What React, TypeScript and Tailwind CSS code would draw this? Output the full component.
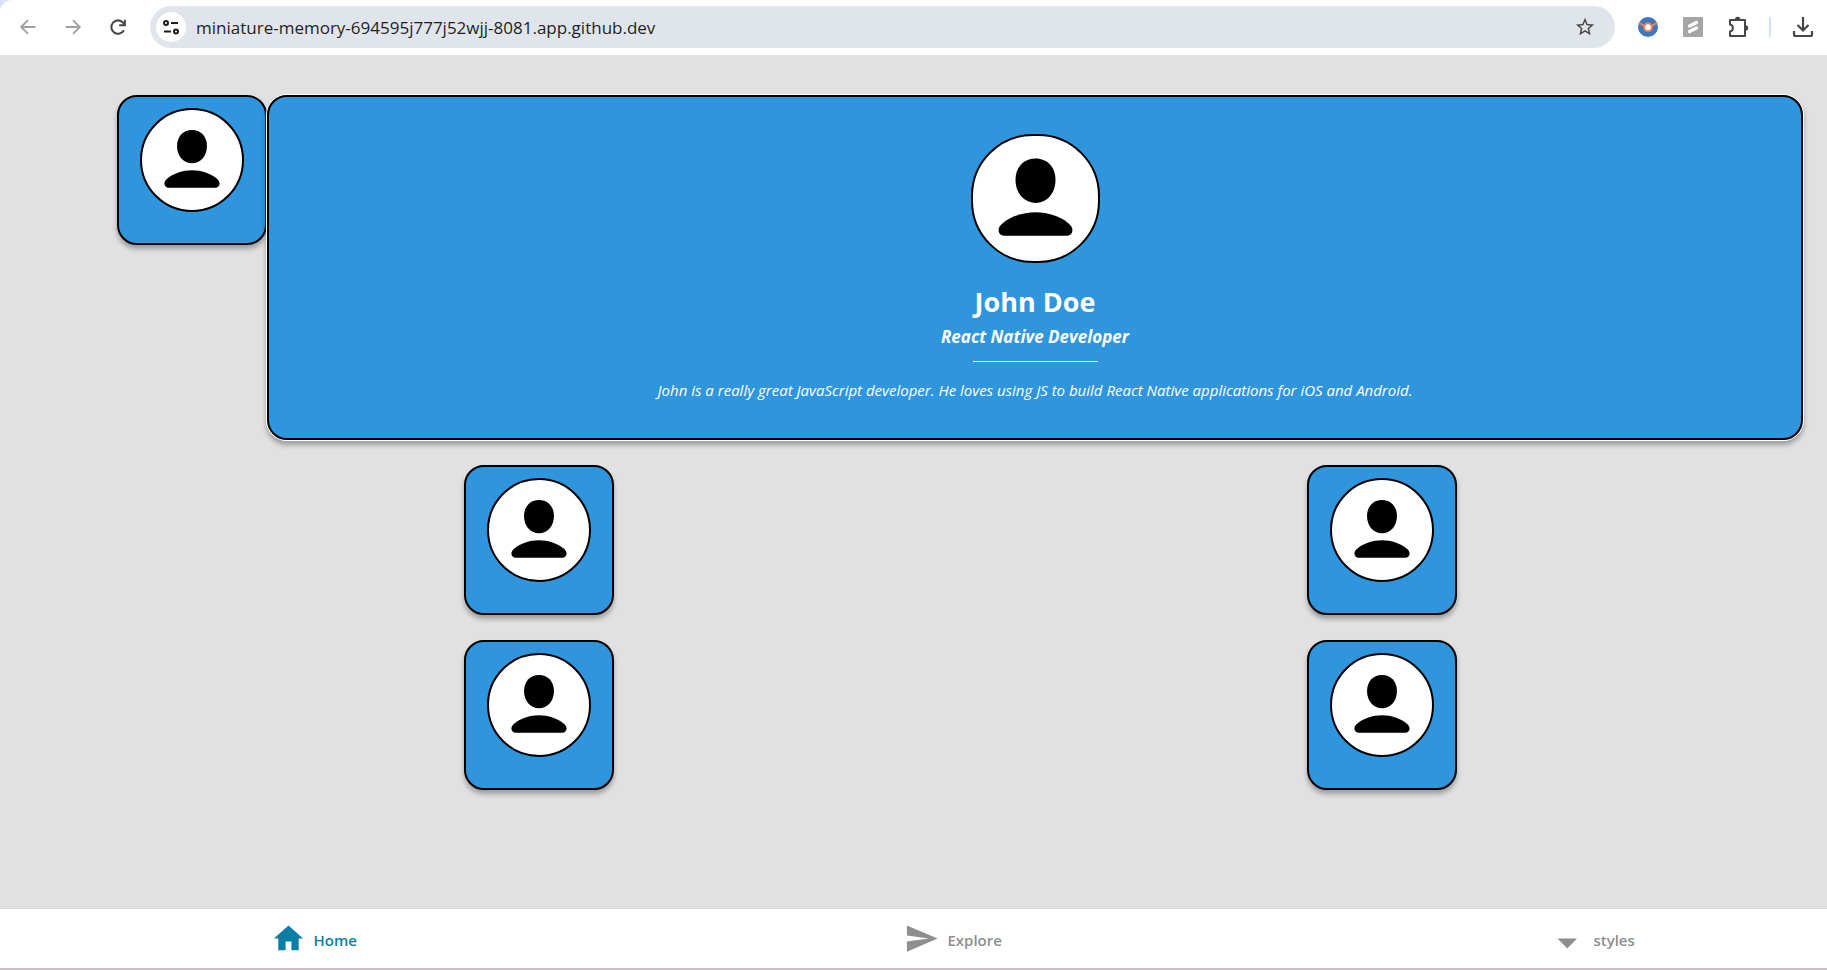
import React from "react";
import { MdHome, MdSend, MdStarOutline } from "react-icons/md";

function PersonIcon({ viewBox }: { viewBox: string }) {
  return (
    <svg viewBox={viewBox} className="size-full" fill="#000" aria-hidden="true">
      <path d="M50 18C60 18 66 25.500 66 35C66 46 59 53.500 50 53.500C41 53.500 34 46 34 35C34 25.500 40 18 50 18Z" />
      <path d="M50 61C60 61 70 64.500 76 69.500C79 72 79.500 73.500 79.500 75.500C79.500 78 77.500 79.700 75 79.700H25C22.500 79.700 20.500 78 20.500 75.500C20.500 73.500 21 72 24 69.500C30 64.500 40 61 50 61Z" />
    </svg>
  );
}

function MiniCard() {
  return (
    <article className="flex size-[150px] shrink-0 justify-center rounded-[20px] border-2 border-black bg-[#2f95dc] pt-[11px] shadow-[0_4px_5px_rgba(0,0,0,0.3)]">
      <div className="size-[104px] rounded-full border-2 border-black bg-white">
        <PersonIcon viewBox="-3.5 -3.5 107 107" />
      </div>
    </article>
  );
}

function ProfileCard() {
  return (
    <article className="-mx-px -mt-px min-w-0 flex-1 rounded-[21px] border border-white shadow-[0_4px_5px_rgba(0,0,0,0.3)]">
      <div className="flex flex-col items-center rounded-[20px] border-2 border-black bg-[#2f95dc] px-4 pt-[37px] pb-9 text-white">
        <div className="size-[129px] rounded-[62px] border-2 border-black bg-white">
          <PersonIcon viewBox="0 0 100 100" />
        </div>
        <h1 className="mt-5 text-[27px] leading-[38px] font-bold">John Doe</h1>
        <p className="text-[17px] leading-8 font-bold italic">React Native Developer</p>
        <hr className="mt-2 w-[125px] border-white" />
        <p className="mt-4 text-[15px] leading-6 italic">
          John is a really great JavaScript developer. He loves using JS to build React Native applications for iOS and
          Android.
        </p>
      </div>
    </article>
  );
}

const toolButton = "flex h-10 w-[45px] shrink-0 items-center justify-center";

function BrowserBar() {
  return (
    <header className="bg-[#d3e3fd]">
      <div className="flex h-[55px] items-center rounded-tl-xl bg-white pr-0.5 pb-px pl-[5px]">
        <button aria-label="Back" className={toolButton}>
          <svg viewBox="0 0 24 24" className="size-[22px]" fill="none" stroke="#a0a0a0" strokeWidth="2">
            <path d="M20 12H5M12 4.500L4.500 12L12 19.500" />
          </svg>
        </button>
        <button aria-label="Forward" className={toolButton}>
          <svg viewBox="0 0 24 24" className="size-[22px]" fill="none" stroke="#a0a0a0" strokeWidth="2">
            <path d="M4 12H19M12 4.500L19.500 12L12 19.500" />
          </svg>
        </button>
        <button aria-label="Reload" className={toolButton}>
          <svg viewBox="0 0 24 24" className="size-[22px]" fill="none" stroke="#444746" strokeWidth="2.2">
            <path d="M18.500 15.500A7.300 7.300 0 1 1 17.500 7.200L19 9" />
            <path d="M19.500 4V10.200H13.300" />
          </svg>
        </button>
        <div className="ml-2.5 flex h-[42px] min-w-0 flex-1 items-center rounded-full bg-[#e0e5ec] pr-2 pl-1.5">
          <button aria-label="Site information" className="flex size-[30px] shrink-0 items-center justify-center rounded-full bg-white">
            <svg viewBox="0 0 18 18" className="size-[18px]" fill="none" stroke="#1f1f1f" strokeWidth="2">
              <circle cx="4" cy="5" r="2" />
              <path d="M9 5H16M2 13.500H9" />
              <circle cx="14" cy="13.500" r="2" />
            </svg>
          </button>
          <input
            aria-label="Address"
            className="ml-2.5 h-8 min-w-0 flex-1 bg-transparent text-[17px] text-[#1f1f1f] outline-none"
            defaultValue="miniature-memory-694595j777j52wjj-8081.app.github.dev"
          />
          <button aria-label="Bookmark" className={toolButton}>
            <MdStarOutline className="size-[22px] text-[#444746]" />
          </button>
        </div>
        <div className="ml-2.5 flex items-center">
          <button aria-label="Lens extension" className={toolButton}>
            <svg viewBox="0 0 20 20" className="size-5">
              <circle cx="10" cy="10" r="10" fill="#3b78c0" />
              <path d="M0.800 5.500L7 9.500M19.200 5.500L13 9.500" stroke="#f4814a" strokeWidth="2" />
              <circle cx="10" cy="10.200" r="3.900" fill="#fff" stroke="#f4814a" strokeWidth="2" />
            </svg>
          </button>
          <button aria-label="Notes extension" className={toolButton}>
            <svg viewBox="0 0 20 20" className="size-5">
              <rect width="20" height="20" rx="1" fill="#a5a5a5" />
              <path d="M6.500 9L13.500 5.500M6.500 14.500L13.500 11" stroke="#fff" strokeWidth="3.200" strokeLinecap="round" />
            </svg>
          </button>
          <button aria-label="Extensions" className={toolButton}>
            <svg viewBox="0 0 22 22" className="size-[22px]" fill="none" stroke="#444746" strokeWidth="2">
              <path d="M3 4H18V20H3V15.500C6.800 14.800 6.800 9.200 3 8.500Z" strokeLinejoin="round" />
              <path d="M8 3.500A2.700 2.700 0 0 1 13.400 3.500ZM18.500 9.200A2.700 2.700 0 0 1 18.500 14.600Z" fill="#444746" stroke="none" />
            </svg>
          </button>
          <span className="mx-[9px] h-5 w-0.5 bg-[#d3e3fd]" />
          <button aria-label="Downloads" className={toolButton}>
            <svg viewBox="0 0 22 22" className="size-[22px]" fill="none" stroke="#444746" strokeWidth="2.200">
              <path d="M11 1V14M5.500 9L11 14.500L16.500 9" />
              <path d="M2 15V18.500Q2 20 3.500 20H18.500Q20 20 20 18.500V15" />
            </svg>
          </button>
        </div>
      </div>
    </header>
  );
}

const tabLink = "flex items-center justify-center gap-2 pr-3 text-[15px] font-semibold";

function TabBar() {
  return (
    <nav className="border-t border-b-2 border-t-[#d8d8d8] border-b-[#cdbcc4] bg-white">
      <div className="grid h-[59px] w-[105%] grid-cols-3">
        <a href="#home" className={`${tabLink} text-[#0a7ea4]`}>
          <MdHome className="size-[35px]" />
          <span className="pt-1">Home</span>
        </a>
        <a href="#explore" className={`${tabLink} text-[#8e8e8f]`}>
          <MdSend className="size-[35px]" />
          <span className="pt-1">Explore</span>
        </a>
        <a href="#styles" className={`${tabLink} text-[#8e8e8f]`}>
          <svg viewBox="0 0 35 35" className="size-[35px]" fill="currentColor" aria-hidden="true">
            <path d="M7.500 17.500H27L17.300 27.500Z" />
          </svg>
          <span className="pt-1">styles</span>
        </a>
      </div>
    </nav>
  );
}

export default function App() {
  return (
    <div className="flex min-h-screen flex-col overflow-hidden bg-[#e1e1e1] font-['Open_Sans','Noto_Sans',sans-serif]">
      <BrowserBar />
      <main className="flex-1 pt-10 pr-6 pl-[117px]">
        <section className="flex items-start">
          <MiniCard />
          <ProfileCard />
        </section>
        <section className="mt-6 grid grid-cols-2 justify-items-center gap-y-[25px]">
          <MiniCard />
          <MiniCard />
          <MiniCard />
          <MiniCard />
        </section>
      </main>
      <TabBar />
    </div>
  );
}
